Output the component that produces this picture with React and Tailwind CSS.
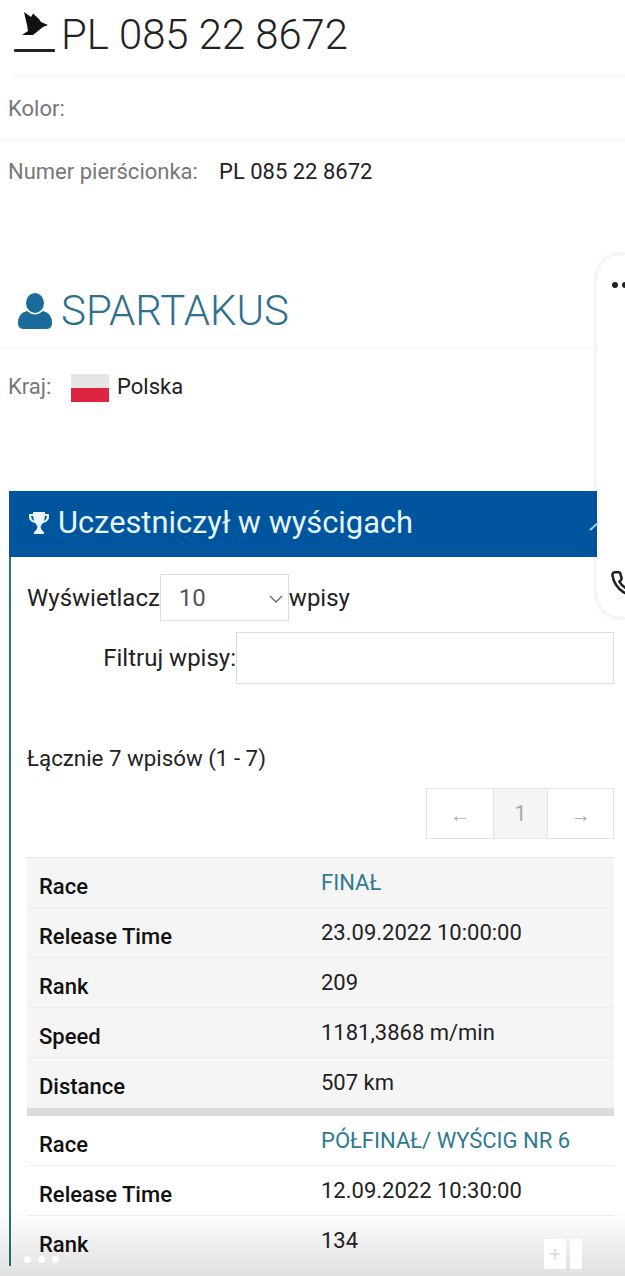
import React from "react";

const Row = ({ label, value, link, shade, last }) => (
  <div className={`flex h-[50px] ${last ? "" : "border-b border-[#eeeeee]"} ${shade ? "bg-[#f5f5f5]" : "bg-white"}`}>
    <div className="w-[294px] pl-3 pt-[15px] text-[22px] leading-[28px] font-medium text-[#111]">{label}</div>
    <div className={`pt-[11px] text-[22px] leading-[28px] ${link ? "text-[#2f7a94]" : "text-[#222]"}`}>{value}</div>
  </div>
);

const Pigeon = () => (
  <svg viewBox="14 10 42 43" className="w-[42px] h-[43px] shrink-0">
    <path d="M24 12 L31 17 L33 13.5 L39 19 L41 22 L48 25 L43 27 L38 31 L33 35 L22 35 L28 31 L27 25 Z" fill="#111" />
    <rect x="14" y="49" width="41" height="3" rx="1" fill="#222" />
  </svg>
);

const User = () => (
  <svg viewBox="0 0 34 36" className="w-[34px] h-[36px] shrink-0">
    <ellipse cx="17" cy="10" rx="9" ry="10" fill="#1a6a9a" />
    <path d="M9 18 Q17 25 25 18 Q34 20 34 30 Q34 36 28 36 L6 36 Q0 36 0 30 Q0 20 9 18 Z" fill="#1a6a9a" />
  </svg>
);

const Trophy = () => (
  <svg viewBox="0 0 22 24" className="w-[22px] h-[24px] shrink-0">
    <path d="M5 1 H17 V3 H21 Q22 11 15 12 Q13 14 12.5 16 Q13 19 16 21 V23 H6 V21 Q9 19 9.5 16 Q9 14 7 12 Q0 11 1 3 H5 Z M5 5 H3 Q3 8 6 10 Z M17 5 L16 10 Q19 8 19 5 Z" fill="#eaf6fb" fillRule="evenodd" />
  </svg>
);

export default function App() {
  return (
    <div className="relative w-[625px] h-[1276px] overflow-hidden bg-white font-['Roboto',sans-serif]">
      <div className="flex items-start h-[77px] ml-[13px] pl-[1px] pt-[10px] border-b border-[#f3f3f3]">
        <Pigeon />
        <h1 className="ml-[5px] -mt-[1px] text-[41.8px] leading-[52px] font-light text-[#222]">PL 085 22 8672</h1>
      </div>

      <div className="h-[63px] pl-[8px] pt-[18px] text-[22px] leading-[28px] text-[#777] border-b border-[#f3f3f3]">Kolor:</div>
      <div className="flex h-[60px] pl-[8px] pt-[18px] text-[22px] leading-[28px]">
        <span className="w-[211px] text-[#777]">Numer pierścionka:</span>
        <span className="text-[#222]">PL 085 22 8672</span>
      </div>

      <div className="flex items-center h-[91px] mt-[58px] pt-[16px] pl-[18px] gap-[9px] border-b border-[#f6f6f6]">
        <User />
        <h2 className="text-[42px] leading-[52px] font-light text-[#2d7090]">SPARTAKUS</h2>
      </div>

      <div className="flex items-center h-[74px] pl-[8px] text-[22px]">
        <span className="w-[63px] text-[#777]">Kraj:</span>
        <span className="flex flex-col w-[38px] h-[28px] mt-[4px]">
          <span className="h-[14px] bg-[#e6e6e6]"></span>
          <span className="h-[14px] bg-[#dd2440]"></span>
        </span>
        <span className="ml-[8px] text-[#222]">Polska</span>
      </div>

      <div className="mt-[68px] ml-[9px] border-l-2 border-[#2b6f80]">
        <div className="flex items-center h-[66px] -ml-[2px] pl-[19px] pb-[3px] gap-[8px] bg-[#00559f]">
          <Trophy />
          <span className="text-[30.8px] leading-[40px] text-[#e6f6fb]">Uczestniczył w wyścigach</span>
        </div>

        <div className="pl-[16px] pr-[11px]">
          <div className="flex items-center mt-[17px] h-[47px] text-[24px] text-[#222]">
            <span>Wyświetlacz</span>
            <div className="relative flex items-center w-[129px] h-[47px] pl-[18px] border border-[#ddd] text-[#555]">
              10
              <svg viewBox="0 0 14 8" className="absolute right-[5px] top-[20px] w-[14px] h-[8px]">
                <path d="M1 1 L7 7 L13 1" fill="none" stroke="#666" strokeWidth="1.3" />
              </svg>
            </div>
            <span>wpisy</span>
          </div>

          <div className="flex items-center justify-end mt-[11px] h-[52px] text-[24px] text-[#222]">
            <span>Filtruj wpisy:</span>
            <div className="w-[378px] h-[52px] border border-[#ddd]"></div>
          </div>

          <div className="mt-[58px] h-[32px] text-[22.3px] leading-[32px] text-[#222]">Łącznie 7 wpisów (1 - 7)</div>

          <div className="flex justify-end mt-[14px]">
            <div className="flex h-[51px] border border-[#e3e3e3] text-[#aaa]">
              <span className="flex items-center justify-center w-[66px] pt-[3px] text-[20px]">←</span>
              <span className="flex items-center justify-center w-[55px] bg-[#f5f5f5] border-x border-[#e3e3e3] text-[22px]">1</span>
              <span className="flex items-center justify-center w-[65px] pt-[3px] text-[20px]">→</span>
            </div>
          </div>

          <div className="mt-[18px] border-t border-[#e3e3e3]">
            <Row shade label="Race" value="FINAŁ" link />
            <Row shade label="Release Time" value="23.09.2022 10:00:00" />
            <Row shade label="Rank" value="209" />
            <Row shade label="Speed" value="1181,3868 m/min" />
            <Row shade last label="Distance" value="507 km" />
            <div className="h-[8px] bg-[#dcdcdc]"></div>
            <Row label="Race" value="PÓŁFINAŁ/ WYŚCIG NR 6" link />
            <Row label="Release Time" value="12.09.2022 10:30:00" />
            <Row last label="Rank" value="134" />
          </div>
        </div>
      </div>

      {/* floating panel over the page */}
      <div className="absolute left-[597px] top-[255px] w-[80px] h-[362px] rounded-[24px] bg-white shadow-[0_0_6px_rgba(0,0,0,0.12)]">
        <div className="absolute left-[15px] top-[27px] flex gap-[4px]">
          <span className="w-[6px] h-[6px] rounded-full bg-[#222]"></span>
          <span className="w-[6px] h-[6px] rounded-full bg-[#222]"></span>
        </div>
        <svg viewBox="0 0 24 24" className="absolute left-[13px] top-[315px] w-[28px] h-[28px]">
          <path d="M22 16.9v3a2 2 0 0 1-2.2 2 19.8 19.8 0 0 1-8.6-3.1 19.5 19.5 0 0 1-6-6A19.8 19.8 0 0 1 2.1 4.2 2 2 0 0 1 4.1 2h3a2 2 0 0 1 2 1.7c.1 1 .4 1.9.7 2.8a2 2 0 0 1-.5 2.1L8.1 9.9a16 16 0 0 0 6 6l1.3-1.3a2 2 0 0 1 2.1-.4c.9.3 1.8.6 2.8.7a2 2 0 0 1 1.7 2z" fill="none" stroke="#222" strokeWidth="2.2" />
        </svg>
        <svg viewBox="0 0 10 10" className="absolute -left-[8px] top-[266px] w-[10px] h-[10px]">
          <path d="M1 9 L9 2" stroke="#9fd4f0" strokeWidth="2" />
        </svg>
      </div>

      {/* bottom overlay */}
      <div className="absolute left-0 right-0 bottom-0 h-[66px] bg-gradient-to-b from-transparent to-[rgba(0,0,0,0.12)]">
        <div className="absolute left-[24px] top-[46px] flex gap-[7px]">
          <span className="w-[7px] h-[7px] rounded-full bg-white"></span>
          <span className="w-[7px] h-[7px] rounded-full bg-white"></span>
          <span className="w-[7px] h-[7px] rounded-full bg-white"></span>
        </div>
        <div className="absolute left-[544px] top-[29px] flex gap-[4px]">
          <div className="flex items-center justify-center w-[22px] h-[30px] rounded-[2px] bg-white text-[20px] leading-none text-[#ddd]">+</div>
          <div className="w-[12px] h-[30px] rounded-[2px] bg-white"></div>
        </div>
      </div>
    </div>
  );
}
